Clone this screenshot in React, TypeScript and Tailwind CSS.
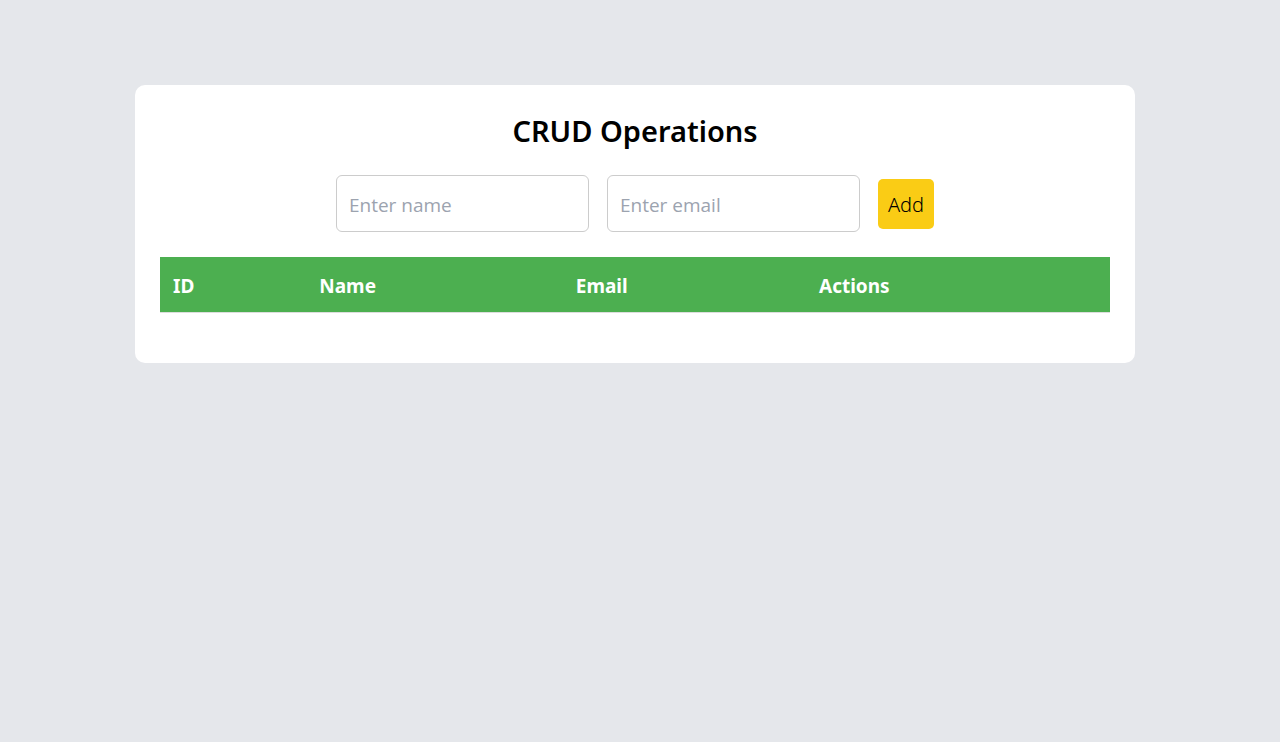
import { useState } from "react";

type User = { id: number; name: string; email: string };

export default function App() {
  const [users, setUsers] = useState<User[]>([]);
  const [name, setName] = useState("");
  const [email, setEmail] = useState("");

  const addUser = () => {
    if (!name || !email) return;
    setUsers([...users, { id: Date.now(), name, email }]);
    setName("");
    setEmail("");
  };

  const input =
    "w-[253px] rounded-md border border-[#cccccc] px-3 pt-4 pb-3 font-['Open_Sans','Noto_Sans',sans-serif] text-[19px] leading-[27px] text-black placeholder:text-[#9ca3af]";
  const heading = "px-[13px] pt-4 pb-3 font-bold";

  return (
    <div className="min-h-screen bg-[#e5e7eb] pt-[85px] pr-[10px] font-['Noto_Sans',sans-serif] text-black">
      <main className="mx-auto w-full max-w-[1000px] rounded-[10px] bg-white px-[25px] pt-[25px] pb-[50px]">
        <h1 className="text-center text-[29px] leading-[42px] font-semibold">CRUD Operations</h1>
        <div className="mt-[23px] flex items-center justify-center gap-[18px]">
          <input
            className={input}
            type="text"
            aria-label="Name"
            placeholder="Enter name"
            value={name}
            onChange={(e) => setName(e.target.value)}
          />
          <input
            className={input}
            type="email"
            aria-label="Email"
            placeholder="Enter email"
            value={email}
            onChange={(e) => setEmail(e.target.value)}
          />
          <button
            type="button"
            className="rounded-[5px] bg-[#facc15] px-[10px] pt-3 pb-[10px] text-[20px] leading-[28px] font-light"
            onClick={addUser}
          >
            Add
          </button>
        </div>
        <table className="mt-[25px] w-full table-fixed border-collapse text-left text-[19px] leading-[27px]">
          <colgroup>
            <col className="w-[15.4%]" />
            <col className="w-[27%]" />
            <col className="w-[25.6%]" />
            <col />
          </colgroup>
          <thead>
            <tr className="border-b border-[#dddddd] bg-[#4caf50] text-white">
              <th className={heading}>ID</th>
              <th className={heading}>Name</th>
              <th className={heading}>Email</th>
              <th className={heading}>Actions</th>
            </tr>
          </thead>
          <tbody>
            {users.map((user) => (
              <tr key={user.id} className="border-b border-[#dddddd]">
                <td className="p-3">{user.id}</td>
                <td className="p-3">{user.name}</td>
                <td className="p-3">{user.email}</td>
                <td className="p-3">
                  <button type="button" onClick={() => setUsers(users.filter((u) => u.id !== user.id))}>
                    Delete
                  </button>
                </td>
              </tr>
            ))}
          </tbody>
        </table>
      </main>
    </div>
  );
}
